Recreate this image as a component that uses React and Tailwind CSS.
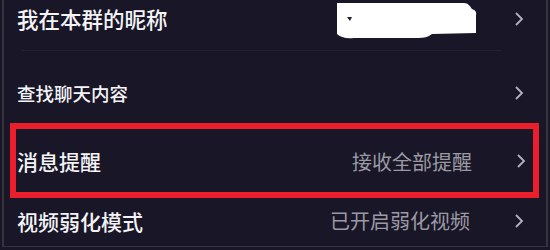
const FONT = { fontFamily: '"Noto Sans CJK SC", "Noto Sans", sans-serif' }

function Chevron() {
  return (
    <svg width="10" height="16" viewBox="0 0 10 16" className="flex-shrink-0">
      <polyline points="2,2 8,8 2,14" fill="none" stroke="#b4b3bd" strokeWidth="1.8" />
    </svg>
  )
}

function Blob() {
  return (
    <svg width="142" height="40" viewBox="0 0 142 40" className="flex-shrink-0">
      <path
        d="M1 1 L128 1 C132 1 134 4 136 7 C139 8 141 10 140 13 L140 31 L96 32 C92 35 88 36 82 36 L18 36 C10 37 4 35 1 32 Z"
        fill="#ffffff"
      />
      <path d="M11 15 L16 15 L14 19 Z" fill="#222" />
    </svg>
  )
}

export default function App() {
  return (
    <div className="w-[550px] h-[250px] bg-[#181627] px-[2px] overflow-hidden" style={FONT}>
      <div className="h-[247px] border-x-2 border-b border-[#35343f]">
        {/* row 1 */}
        <div className="h-[37px] flex items-center pl-[13px] pr-[22px]">
          <span className="text-[21.5px] font-medium text-[#f4f4f6] leading-none">我在本群的昵称</span>
          <div className="flex-1" />
          <div className="mt-[7px] mr-[36px]">
            <Blob />
          </div>
          <Chevron />
        </div>
        <div className="mt-[13px] ml-[18px] mr-[44px] h-px bg-[#22212f]" />

        {/* row 2 */}
        <div className="mt-[22px] h-[40px] flex items-center pl-[13px] pr-[22px]">
          <span className="text-[18.5px] font-medium text-[#f4f4f6] leading-none">查找聊天内容</span>
          <div className="flex-1" />
          <Chevron />
        </div>

        {/* row 3 - highlighted */}
        <div className="mt-[10px] ml-[6px] mr-[7px] h-[75px] border-[6px] border-[#ea1f2b] flex items-center pl-[1px] pr-[7px]">
          <span className="text-[21px] font-medium text-[#f4f4f6] leading-none mt-[2px]">消息提醒</span>
          <div className="flex-1" />
          <span className="text-[20px] text-[#9b9aa3] leading-none mt-[2px] mr-[44px]">接收全部提醒</span>
          <Chevron />
        </div>

        {/* row 4 */}
        <div className="mt-[5px] h-[36px] flex items-center pl-[13px] pr-[22px]">
          <span className="text-[21px] font-medium text-[#f4f4f6] leading-none">视频弱化模式</span>
          <div className="flex-1" />
          <span className="text-[20px] text-[#9b9aa3] leading-none mr-[44px]">已开启弱化视频</span>
          <Chevron />
        </div>
      </div>
    </div>
  )
}
